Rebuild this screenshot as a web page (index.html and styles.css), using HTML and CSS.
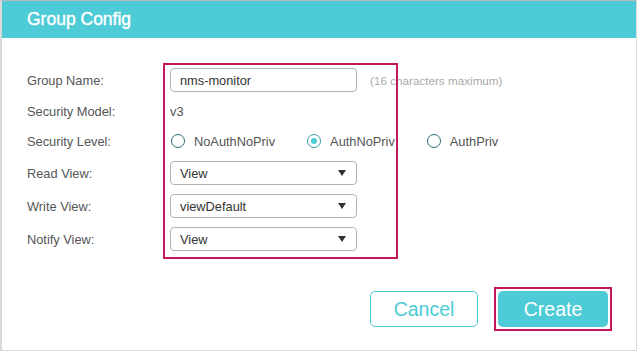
FILE: index.html
```html
<!DOCTYPE html>
<html lang="en">
<head>
    <meta charset="UTF-8">
    <meta name="viewport" content="width=device-width, initial-scale=1.0">
    <title>Group Config</title>
    <link rel="stylesheet" href="styles.css">
</head>
<body>
    <div class="dialog">
        <div class="dialog-head">Group Config</div>

        <div class="dialog-body">
            <div class="form">
                <div class="row">
                    <label class="lbl">Group Name:</label>
                    <input type="text" class="txt" value="nms-monitor">
                    <span class="hint">(16 characters maximum)</span>
                </div>
                <div class="row row-short">
                    <label class="lbl">Security Model:</label>
                    <span class="val">v3</span>
                </div>
                <div class="row row-short">
                    <label class="lbl">Security Level:</label>
                    <div class="radios">
                        <span class="radio"><i class="dot"></i>NoAuthNoPriv</span>
                        <span class="radio checked"><i class="dot"></i>AuthNoPriv</span>
                        <span class="radio"><i class="dot"></i>AuthPriv</span>
                    </div>
                </div>
                <div class="row row-sel">
                    <label class="lbl">Read View:</label>
                    <div class="sel"><span>View</span><i class="arrow"></i></div>
                </div>
                <div class="row row-sel">
                    <label class="lbl">Write View:</label>
                    <div class="sel"><span>viewDefault</span><i class="arrow"></i></div>
                </div>
                <div class="row row-sel">
                    <label class="lbl">Notify View:</label>
                    <div class="sel"><span>View</span><i class="arrow"></i></div>
                </div>
            </div>
            <!-- highlight around the controls -->
            <div class="mark"></div>
        </div>

        <div class="dialog-foot">
            <button class="btn btn-cancel">Cancel</button>
            <div class="mark-btn">
                <button class="btn btn-create">Create</button>
            </div>
        </div>
    </div>
</body>
</html>
```

FILE: styles.css
```css
body{
    margin: 0;
    background-color: #fff;
    font-family: "Liberation Sans", Arial, sans-serif;
}
.dialog{
    width: 637px;
    height: 351px;
    box-sizing: border-box;
    border-top: 1px solid #b9b9b9;
    border-left: 2px solid #dadada;
    border-right: 1px solid #dadada;
    border-bottom: 1px solid #dadada;
    display: flex;
    flex-direction: column;
}
.dialog-head{
    height: 37px;
    background-color: #4dcbd6;
    color: #fff;
    font-size: 17.5px;
    line-height: 37px;
    padding-left: 25px;
    -webkit-text-stroke: 0.4px #fff;
}
.dialog-body{
    position: relative;
    padding: 30px 0 0 25px;
}
.form{
    display: flex;
    flex-direction: column;
    gap: 8px;
}
.row{
    display: flex;
    align-items: center;
    height: 24px;
    font-size: 12.8px;
    color: #555;
}
.row-short{
    height: 22px;
}
.row-sel{
    margin-top: 1px;
}
.lbl{
    width: 143px;
}
.txt{
    width: 187px;
    height: 24px;
    box-sizing: border-box;
    border: 1px solid #b4b4b4;
    border-radius: 4px;
    padding: 0 9px;
    font-family: inherit;
    font-size: 12.8px;
    color: #333;
    outline: none;
}
.hint{
    margin-left: 13px;
    font-size: 11.7px;
    color: #aaa;
}
.val{
    color: #555;
}
.radios{
    display: flex;
    align-items: center;
}
.radio{
    display: flex;
    align-items: center;
    margin-right: 32px;
}
.radio:first-child{
    margin-left: 1px;
}
.dot{
    width: 14px;
    height: 14px;
    box-sizing: border-box;
    border: 1.5px solid #2b6b74;
    border-radius: 50%;
    margin-right: 9px;
    position: relative;
}
.checked .dot{
    border-color: #3a9ea8;
}
.checked .dot::after{
    content: "";
    position: absolute;
    left: 2.5px;
    top: 2.5px;
    width: 6px;
    height: 6px;
    border-radius: 50%;
    background-color: #4dcbd6;
}
.sel{
    width: 187px;
    height: 24px;
    box-sizing: border-box;
    border: 1px solid #b4b4b4;
    border-radius: 4px;
    padding: 0 10px 0 9px;
    display: flex;
    align-items: center;
    justify-content: space-between;
    color: #333;
}
.arrow{
    width: 0;
    height: 0;
    border-left: 4.5px solid transparent;
    border-right: 4.5px solid transparent;
    border-top: 6px solid #333;
}
.mark{
    position: absolute;
    left: 161px;
    top: 25px;
    width: 235px;
    height: 196px;
    box-sizing: border-box;
    border: 2px solid #c2185b;
}
.dialog-foot{
    display: flex;
    justify-content: flex-end;
    align-items: center;
    gap: 16px;
    padding: 36px 24px 0 0;
}
.btn{
    height: 36px;
    border-radius: 5px;
    font-family: inherit;
    font-size: 19.5px;
    cursor: pointer;
}
.btn-cancel{
    width: 108px;
    background-color: #fff;
    border: 1px solid #4dcbd6;
    color: #4dcbd6;
}
.mark-btn{
    border: 2px solid #c2185b;
    padding: 2px;
    display: flex;
}
.btn-create{
    width: 110px;
    background-color: #4dcbd6;
    border: none;
    color: #fff;
}
```
